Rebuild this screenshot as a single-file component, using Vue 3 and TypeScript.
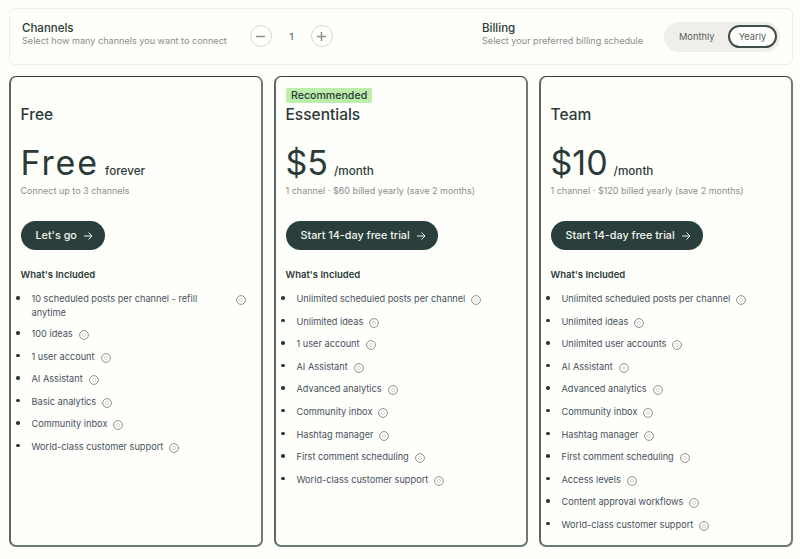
<script setup lang="ts">
interface Plan {
  name: string;
  price: string;
  period: string;
  note: string;
  cta: string;
  badge?: string;
  features: string[];
}

const plans: Plan[] = [
  {
    name: "Free",
    price: "Free",
    period: "forever",
    note: "Connect up to 3 channels",
    cta: "Let's go",
    features: [
      "10 scheduled posts per channel - refill anytime",
      "100 ideas",
      "1 user account",
      "AI Assistant",
      "Basic analytics",
      "Community inbox",
      "World-class customer support",
    ],
  },
  {
    name: "Essentials",
    price: "$5",
    period: "/month",
    note: "1 channel · $60 billed yearly (save 2 months)",
    cta: "Start 14-day free trial",
    badge: "Recommended",
    features: [
      "Unlimited scheduled posts per channel",
      "Unlimited ideas",
      "1 user account",
      "AI Assistant",
      "Advanced analytics",
      "Community inbox",
      "Hashtag manager",
      "First comment scheduling",
      "World-class customer support",
    ],
  },
  {
    name: "Team",
    price: "$10",
    period: "/month",
    note: "1 channel · $120 billed yearly (save 2 months)",
    cta: "Start 14-day free trial",
    features: [
      "Unlimited scheduled posts per channel",
      "Unlimited ideas",
      "Unlimited user accounts",
      "AI Assistant",
      "Advanced analytics",
      "Community inbox",
      "Hashtag manager",
      "First comment scheduling",
      "Access levels",
      "Content approval workflows",
      "World-class customer support",
    ],
  },
];
</script>

<template>
  <div class="page">
    <section class="options">
      <div class="channels">
        <div class="option-text">
          <h2>Channels</h2>
          <p>Select how many channels you want to connect</p>
        </div>
        <div class="stepper">
          <button class="step" aria-label="Remove channel">
            <svg width="11" height="11" viewBox="0 0 11 11"><path d="M1 5.5h9" /></svg>
          </button>
          <span class="count">1</span>
          <button class="step" aria-label="Add channel">
            <svg width="11" height="11" viewBox="0 0 11 11"><path d="M1 5.5h9M5.5 1v9" /></svg>
          </button>
        </div>
      </div>
      <div class="billing">
        <div class="option-text">
          <h2>Billing</h2>
          <p>Select your preferred billing schedule</p>
        </div>
        <div class="toggle">
          <span class="toggle-item">Monthly</span>
          <span class="toggle-item active">Yearly</span>
        </div>
      </div>
    </section>

    <section class="plans">
      <article v-for="plan in plans" :key="plan.name" class="plan">
        <span v-if="plan.badge" class="badge">{{ plan.badge }}</span>
        <h3>{{ plan.name }}</h3>
        <div class="price">
          <strong :class="{ wide: plan.price === 'Free' }">{{ plan.price }}</strong>
          <span>{{ plan.period }}</span>
        </div>
        <p class="note">{{ plan.note }}</p>
        <button class="cta">
          {{ plan.cta }}
          <svg width="10" height="10" viewBox="0 0 10 10"><path d="M1 5h8M5.5 1.5 9 5 5.5 8.5" /></svg>
        </button>
        <h4>What's Included</h4>
        <ul>
          <li v-for="feature in plan.features" :key="feature">
            <span>{{ feature }}</span>
            <svg class="info" width="10" height="10" viewBox="0 0 10 10">
              <circle cx="5" cy="5" r="4.4" />
              <circle class="info-dot" cx="5" cy="5" r="1.6" />
            </svg>
          </li>
        </ul>
      </article>
    </section>
  </div>
</template>

<style>
html,
body {
  background: #fefefa;
}
</style>

<style scoped>
.page {
  width: 800px;
  height: 559px;
  box-sizing: border-box;
  padding: 8px 7px 0 9px;
  font-family: Inter, "Noto Sans", sans-serif;
  color: #2a3a38;
  overflow: hidden;
}

.options {
  height: 57px;
  box-sizing: border-box;
  display: flex;
  align-items: center;
  border: 1px solid #efeee8;
  border-radius: 6px;
  padding: 0 12px;
}

.channels {
  display: flex;
  align-items: center;
  width: 460px;
}

.billing {
  display: flex;
  align-items: center;
}

.option-text {
  padding-bottom: 6px;
  white-space: nowrap;
}

.option-text h2 {
  margin: 0;
  font-size: 11.5px;
  line-height: 14px;
  font-weight: 500;
}

.option-text p {
  margin: 0;
  font-size: 9.1px;
  line-height: 12px;
  color: #8a8e8c;
}

.stepper {
  display: flex;
  align-items: center;
  margin: 0 0 1px 23px;
}

.step {
  width: 22px;
  height: 22px;
  padding: 0;
  display: flex;
  align-items: center;
  justify-content: center;
  background: #fefefa;
  border: 1px solid #d9d9d4;
  border-radius: 50%;
}

.step path {
  stroke: #8d908d;
  stroke-width: 1.5;
  fill: none;
}

.count {
  width: 39px;
  text-align: center;
  font-size: 9.5px;
  color: #3c4650;
}

.toggle {
  display: flex;
  align-items: center;
  margin-left: 21px;
  height: 30px;
  width: 116px;
  box-sizing: border-box;
  padding: 0 3px 0 15px;
  justify-content: space-between;
  background: #efeee8;
  border-radius: 15px;
}

.toggle-item {
  font-size: 9.3px;
  color: #5b6260;
}

.toggle-item.active {
  width: 49px;
  height: 23px;
  box-sizing: border-box;
  display: flex;
  align-items: center;
  justify-content: center;
  background: #fefefc;
  border: 2px solid #3f4e4a;
  border-radius: 12px;
}

.plans {
  display: grid;
  grid-template-columns: repeat(3, 253.5px);
  column-gap: 11.5px;
  margin-top: 11px;
}

.plan {
  position: relative;
  height: 471px;
  box-sizing: border-box;
  padding: 28px 9px 0 9.5px;
  background: #fefefb;
  border: 2px solid #6d7a78;
  border-top: 1px solid #2f403d;
  border-left-color: #5a6866;
  border-radius: 7px;
}

.badge {
  position: absolute;
  top: 11px;
  left: 10px;
  padding: 0 5px;
  height: 15px;
  line-height: 15px;
  font-size: 10.6px;
  font-weight: 500;
  background: #bdedab;
  border-radius: 2px;
}

h3 {
  margin: 0;
  font-size: 15.5px;
  line-height: 20px;
  font-weight: 500;
}

.price {
  display: flex;
  align-items: baseline;
  gap: 6px;
  margin-top: 18px;
}

.price strong {
  font-size: 34px;
  line-height: 40px;
  font-weight: 400;
}

.price strong.wide {
  letter-spacing: 1.9px;
}

.price span {
  font-size: 11.7px;
  font-weight: 500;
}

.note {
  margin: 2px 0 0;
  font-size: 9px;
  line-height: 12px;
  color: #8a8e8c;
}

.cta {
  display: inline-flex;
  align-items: center;
  gap: 6px;
  height: 29px;
  margin-top: 24px;
  padding: 0 12px 0 15px;
  background: #2a3f3b;
  border: 0;
  border-radius: 15px;
  color: #f2f4f0;
  font-family: inherit;
  font-size: 10.8px;
  font-weight: 500;
}

.cta path {
  stroke: #f2f4f0;
  stroke-width: 1;
  fill: none;
}

h4 {
  margin: 18px 0 0;
  font-size: 9.5px;
  line-height: 13px;
  font-weight: 600;
}

ul {
  list-style: none;
  margin: 11px 0 0;
  padding: 0 5.5px 0 11px;
}

li {
  position: relative;
  display: flex;
  align-items: flex-start;
  gap: 6px;
  min-height: 14.6px;
  margin-bottom: 8px;
  font-size: 9.2px;
  line-height: 13.5px;
  color: #48525c;
}

li::before {
  content: "";
  position: absolute;
  left: -15.5px;
  top: 4px;
  width: 3.5px;
  height: 3.5px;
  border-radius: 50%;
  background: #2a3a38;
}

.info {
  flex: none;
  margin-top: 3px;
}

.info circle {
  stroke: #8f918e;
  stroke-width: 1;
  fill: none;
}

.info .info-dot {
  stroke: #c9cac6;
  stroke-width: 0.7;
}
</style>
